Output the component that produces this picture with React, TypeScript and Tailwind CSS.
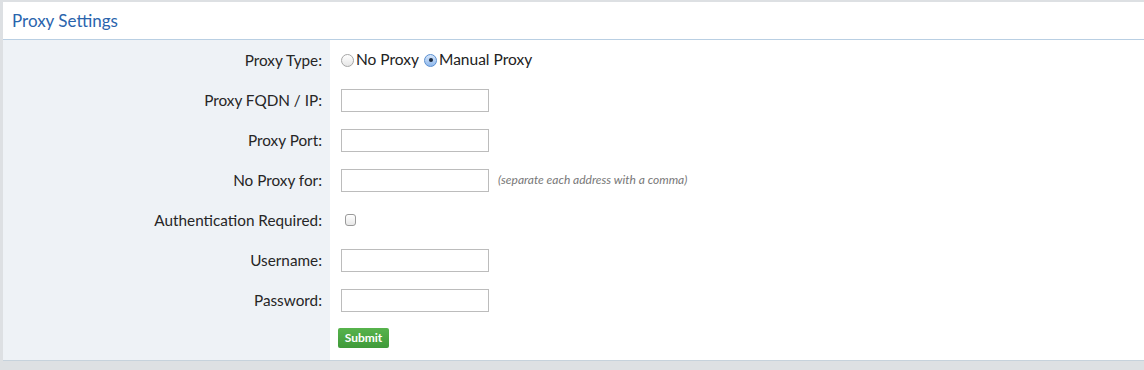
import React, { useState } from 'react';

const Radio: React.FC<{ checked: boolean; onClick: () => void }> = ({ checked, onClick }) => (
  <span
    onClick={onClick}
    className={`inline-flex items-center justify-center w-[13px] h-[13px] rounded-full border cursor-pointer ${
      checked
        ? 'border-[#5a8fd0] bg-gradient-to-b from-[#d6e6fa] to-[#8fb8ec]'
        : 'border-[#a6a6a6] bg-gradient-to-b from-[#ffffff] to-[#e6e6e6]'
    }`}
  >
    {checked && <span className="w-[4px] h-[4px] rounded-full bg-[#1a2a40]" />}
  </span>
);

const TextInput: React.FC<{ type?: string }> = ({ type = 'text' }) => (
  <input type={type} className="w-[148px] h-[23px] border border-[#bcbcbc] bg-white px-1 text-[13px] outline-none" />
);

const Row: React.FC<{ label: string; children: React.ReactNode }> = ({ label, children }) => (
  <div className="flex h-[40px]">
    <div className="w-[327px] shrink-0 bg-[#eef2f6] flex items-center justify-end pr-[8px] text-[15.3px] text-[#262626]">
      {label}
    </div>
    <div className="flex-1 flex items-center pl-[11px]">{children}</div>
  </div>
);

const App: React.FC = () => {
  const [proxyType, setProxyType] = useState<'none' | 'manual'>('manual');
  const [auth, setAuth] = useState(false);

  return (
    <div className="w-[1144px] h-[370px] bg-[#dde0e3] pl-[3px] overflow-hidden" style={{ fontFamily: 'Lato, "Open Sans", sans-serif' }}>
      <div className="h-[2px] w-[935px] bg-[#dde0e3]" />
      <div className="bg-white border-b border-[#c6d2dc]">
        <div className="h-[38px] bg-white border-b border-[#b9cfe3] flex items-center pl-[9px]">
          <h1 className="text-[17px] text-[#2a64ad]">Proxy Settings</h1>
        </div>
        <form onSubmit={(e) => e.preventDefault()}>
          <Row label="Proxy Type:">
            <label className="flex items-center gap-[2px] text-[15.5px] text-[#222]">
              <Radio checked={proxyType === 'none'} onClick={() => setProxyType('none')} />
              No Proxy
            </label>
            <label className="flex items-center gap-[2px] text-[15.5px] text-[#222] ml-[5px]">
              <Radio checked={proxyType === 'manual'} onClick={() => setProxyType('manual')} />
              Manual Proxy
            </label>
          </Row>
          <Row label="Proxy FQDN / IP:">
            <TextInput />
          </Row>
          <Row label="Proxy Port:">
            <TextInput />
          </Row>
          <Row label="No Proxy for:">
            <TextInput />
            <span className="ml-[9px] text-[12px] italic text-[#777]">(separate each address with a comma)</span>
          </Row>
          <Row label="Authentication Required:">
            <span
              onClick={() => setAuth(!auth)}
              className="ml-[4px] w-[11px] h-[12px] rounded-[3px] border border-[#9a9a9a] bg-gradient-to-b from-white to-[#e8e8e8] cursor-pointer flex items-center justify-center text-[9px]"
            >
              {auth ? '✓' : ''}
            </span>
          </Row>
          <Row label="Username:">
            <TextInput />
          </Row>
          <Row label="Password:">
            <TextInput type="password" />
          </Row>
          <Row label="">
            <button
              type="submit"
              className="-ml-[3px] -mt-[4px] h-[20px] w-[51px] rounded-[2px] bg-gradient-to-b from-[#57b34c] to-[#3f9a3a] text-white text-[12px] font-bold"
            >
              Submit
            </button>
          </Row>
        </form>
      </div>
    </div>
  );
};

export default App;
